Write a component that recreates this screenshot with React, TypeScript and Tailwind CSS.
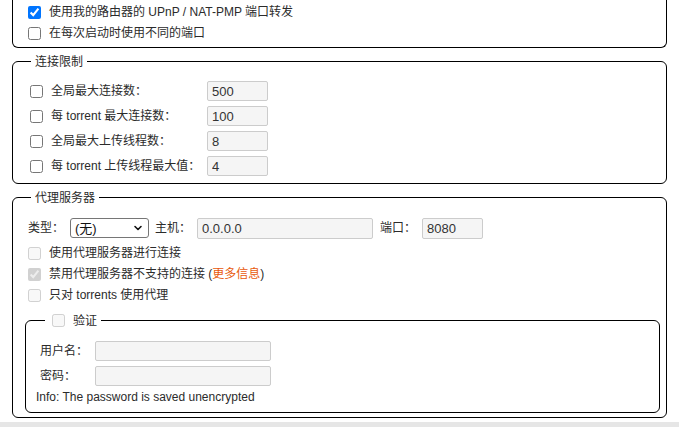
import React from "react";
import { ChevronDown } from "lucide-react";

const inputCls =
  "h-[20px] border border-[#cccccc] bg-[#f5f5f5] rounded-[2px] pl-[4px] text-[13px] text-[#333] outline-none";

const Check = ({
  checked,
  disabled,
  className = "",
}: {
  checked?: boolean;
  disabled?: boolean;
  className?: string;
}) => (
  <input
    type="checkbox"
    defaultChecked={checked}
    disabled={disabled}
    className={`m-0 size-[13px] shrink-0 accent-[#0075ff] ${className}`}
  />
);

const Box = ({
  title,
  className = "",
  children,
}: {
  title: React.ReactNode;
  className?: string;
  children: React.ReactNode;
}) => (
  <fieldset
    className={`border border-black rounded-[6px] pl-[11px] pr-[6px] ${className}`}
  >
    <legend className="ml-[7px] px-1 leading-[14px]">{title}</legend>
    {children}
  </fieldset>
);

const LimitRow = ({ label, value }: { label: string; value: string }) => (
  <div className="flex h-[25px] items-center">
    <Check className="ml-[6px] mr-[8px]" />
    <span className="w-[156px]">{label}</span>
    <input className={`${inputCls} w-[61px]`} defaultValue={value} />
  </div>
);

const CheckRow = ({
  label,
  checked,
  disabled,
  className = "",
}: {
  label: React.ReactNode;
  checked?: boolean;
  disabled?: boolean;
  className?: string;
}) => (
  <label className={`flex h-[21px] items-center ${className}`}>
    <Check
      checked={checked}
      disabled={disabled}
      className="ml-[4px] mr-[8px]"
    />
    <span>{label}</span>
  </label>
);

export default function App() {
  return (
    <div className="flex h-[427px] flex-col overflow-hidden bg-white px-[12px] font-['Liberation_Sans','Noto_Sans_CJK_SC',sans-serif] text-[12px] text-[#2b2b2b]">
      {/* listening port box, its top is scrolled out of view */}
      <div className="rounded-b-[6px] border-x border-b border-black pl-[11px] pr-[6px] pt-[1.5px] pb-[3px]">
        <CheckRow label="使用我的路由器的 UPnP / NAT-PMP 端口转发" checked />
        <CheckRow label="在每次启动时使用不同的端口" />
      </div>

      <Box title="连接限制" className="mt-[7px] pt-[10px] pb-[4px]">
        <LimitRow label="全局最大连接数：" value="500" />
        <LimitRow label="每 torrent 最大连接数：" value="100" />
        <LimitRow label="全局最大上传线程数：" value="8" />
        <LimitRow label="每 torrent 上传线程最大值：" value="4" />
      </Box>

      <Box title="代理服务器" className="mt-[7px] pt-[11px] pb-[4px]">
        <div className="flex h-[25px] items-center">
          <span className="ml-[4px] w-[36px]">类型：</span>
          <div className="relative ml-[6px]">
            <select className="h-[20px] w-[79px] appearance-none rounded-[3px] border border-[#767676] bg-white pl-[4px] text-[13px] text-[#111] outline-none">
              <option>(无)</option>
              <option>SOCKS4</option>
              <option>SOCKS5</option>
              <option>HTTP</option>
            </select>
            <ChevronDown
              size={12}
              strokeWidth={3.2}
              className="pointer-events-none absolute right-[5px] top-[4px] text-[#111]"
            />
          </div>
          <span className="ml-[6px] w-[36px]">主机：</span>
          <input
            className={`${inputCls} ml-[6px] h-[21px] w-[176px]`}
            defaultValue="0.0.0.0"
          />
          <span className="ml-[7px] w-[36px]">端口：</span>
          <input
            className={`${inputCls} ml-[6px] h-[21px] w-[61px]`}
            defaultValue="8080"
          />
        </div>
        <CheckRow label="使用代理服务器进行连接" disabled className="mt-[2px]" />
        <CheckRow
          label={
            <>
              禁用代理服务器不支持的连接 (
              <a href="#" className="text-[#e8590c]">
                更多信息
              </a>
              )
            </>
          }
          checked
          disabled
        />
        <CheckRow label="只对 torrents 使用代理" disabled />

        <fieldset className="ml-[1px] mt-[8px] rounded-[6px] border border-black pl-[10px] pb-[6px] pt-[11px]">
          <legend className="ml-[9px] flex items-center px-1 leading-[14px]">
            <Check disabled className="ml-[3px] mr-[8px]" />
            <span>验证</span>
          </legend>
          <div className="flex h-[25px] items-center">
            <span className="w-[59px] pl-[4px]">用户名：</span>
            <input className={`${inputCls} w-[176px]`} disabled />
          </div>
          <div className="flex h-[25px] items-center">
            <span className="w-[59px] pl-[4px]">密码：</span>
            <input
              type="password"
              className={`${inputCls} w-[176px]`}
              disabled
            />
          </div>
          <div className="leading-[17px]">
            Info: The password is saved unencrypted
          </div>
        </fieldset>
      </Box>

      <div className="-mx-[12px] mt-[4px] flex-1 bg-[#e6e6e6]" />
    </div>
  );
}
